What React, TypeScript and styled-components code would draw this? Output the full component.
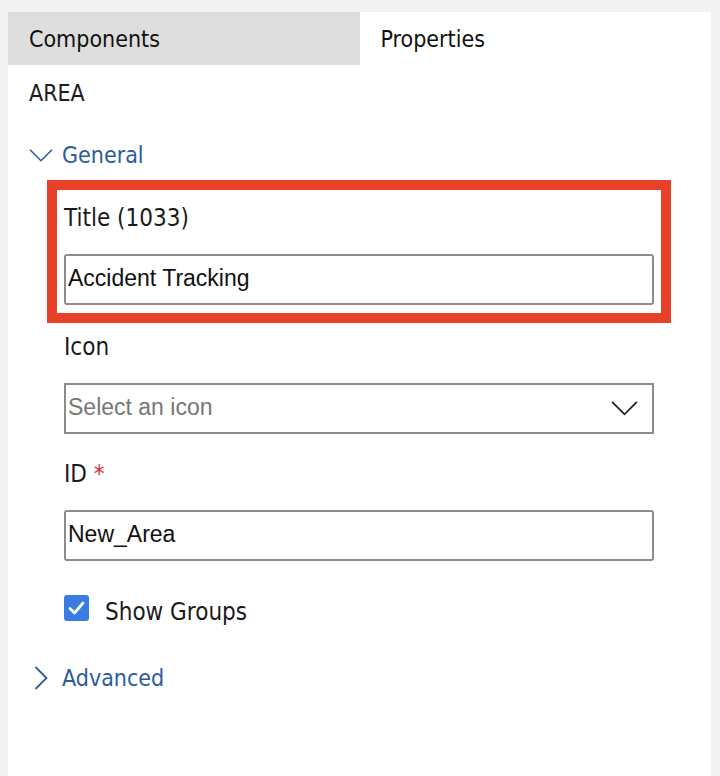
import styled, { createGlobalStyle } from 'styled-components';

const GlobalStyle = createGlobalStyle`
    body {
        margin: 0;
        background: #f2f2f4;
        font-family: "DejaVu Sans Condensed", "DejaVu Sans", sans-serif;
        font-stretch: condensed;
    }
`

const ChevronDown = ({ size = 24 }: { size?: number }) => (
    <svg width={size} height={size * 0.6} viewBox="0 0 24 14" fill="none">
        <path d="M1 1.5 L12 12.5 L23 1.5" stroke="currentColor" strokeWidth="1.6" />
    </svg>
)

const ChevronRight = () => (
    <svg width="14" height="24" viewBox="0 0 14 24" fill="none">
        <path d="M1.5 1 L12.5 12 L1.5 23" stroke="currentColor" strokeWidth="1.8" />
    </svg>
)

const App = (): JSX.Element => {
    return (
        <>
            <GlobalStyle />
            <Panel>
                <Tabs>
                    <Tab>Components</Tab>
                    <Tab active>Properties</Tab>
                </Tabs>
                <Content>
                    <Heading>AREA</Heading>
                    <SectionToggle style={{ marginTop: 34 }}>
                        <ToggleIcon><ChevronDown /></ToggleIcon>
                        General
                    </SectionToggle>
                    <Fields>
                        <Highlight>
                            <Label>Title (1033)</Label>
                            <TextInput readOnly value="Accident Tracking" />
                        </Highlight>
                        <Field gap={10}>
                            <Label>Icon</Label>
                            <SelectBox>
                                <Placeholder>Select an icon</Placeholder>
                                <SelectArrow><ChevronDown size={27} /></SelectArrow>
                            </SelectBox>
                        </Field>
                        <Field gap={26}>
                            <Label>ID <Required>*</Required></Label>
                            <TextInput readOnly value="New_Area" />
                        </Field>
                        <CheckRow>
                            <CheckBox>
                                <svg width="17" height="14" viewBox="0 0 17 14" fill="none">
                                    <path d="M2 7.5 L6.5 12 L15 2" stroke="#fff" strokeWidth="2.8" strokeLinecap="round" strokeLinejoin="round" />
                                </svg>
                            </CheckBox>
                            <CheckLabel>Show Groups</CheckLabel>
                        </CheckRow>
                    </Fields>
                    <SectionToggle style={{ marginTop: 41 }}>
                        <ToggleIcon><ChevronRight /></ToggleIcon>
                        Advanced
                    </SectionToggle>
                </Content>
            </Panel>
        </>
    )
}

export default App

const Panel = styled.div`
    margin: 12px 9px 0 8px;
    background: #fff;
    min-height: 764px;
`
const Tabs = styled.div`
    display: grid;
    grid-template-columns: 1fr 1fr;
    height: 53px;
`
const Tab = styled.div<{ active?: boolean }>`
    display: flex;
    align-items: center;
    padding-left: 21px;
    font-size: 23px;
    color: #111;
    background: ${p => (p.active ? '#fff' : '#dedede')};
`
const Content = styled.div`
    padding: 0 21px;
`
const Heading = styled.div`
    margin-top: 14px;
    font-size: 23px;
    line-height: 28px;
    color: #1e1e1e;
`
const SectionToggle = styled.div`
    display: flex;
    align-items: center;
    height: 28px;
    font-size: 23px;
    color: #2c5c9c;
`
const ToggleIcon = styled.span`
    display: flex;
    align-items: center;
    justify-content: center;
    width: 24px;
    margin-right: 9px;
    color: #2c5c9c;
`
const Fields = styled.div`
    margin-left: 35px;
    width: 590px;
    display: flex;
    flex-direction: column;
`
const Highlight = styled.div`
    margin: 11px -17px 0;
    padding: 14px 7px 8px;
    border: 10px solid #e8412a;
    display: flex;
    flex-direction: column;
`
const Field = styled.div<{ gap: number }>`
    margin-top: ${p => p.gap}px;
    display: flex;
    flex-direction: column;
`
const Label = styled.div`
    font-size: 24px;
    line-height: 28px;
    color: #1a1a1a;
    margin-bottom: 22px;
`
const Required = styled.span`
    color: #d13438;
`
const TextInput = styled.input`
    box-sizing: border-box;
    width: 590px;
    height: 51px;
    border: 2px solid #8c8c8c;
    border-radius: 3px;
    padding: 0 2px 2px;
    font-family: "Liberation Sans", Arial, sans-serif;
    font-size: 23px;
    color: #111;
    background: #fff;
    outline: none;
`
const SelectBox = styled.div`
    box-sizing: border-box;
    width: 590px;
    height: 51px;
    border: 2px solid #8c8c8c;
    display: flex;
    align-items: center;
    justify-content: space-between;
    padding: 0 14px 3px 2px;
`
const Placeholder = styled.span`
    font-family: "Liberation Sans", Arial, sans-serif;
    font-size: 23px;
    color: #777;
`
const SelectArrow = styled.span`
    display: flex;
    color: #222;
    padding-top: 3px;
`
const CheckRow = styled.div`
    margin-top: 34px;
    display: flex;
    align-items: flex-start;
    gap: 16px;
    height: 28px;
    font-size: 24px;
    color: #1a1a1a;
`
const CheckBox = styled.span`
    width: 25px;
    height: 26px;
    border-radius: 3px;
    background: #3a7be4;
    display: flex;
    align-items: center;
    justify-content: center;
`
const CheckLabel = styled.span`
    line-height: 28px;
    margin-top: 3px;
`
